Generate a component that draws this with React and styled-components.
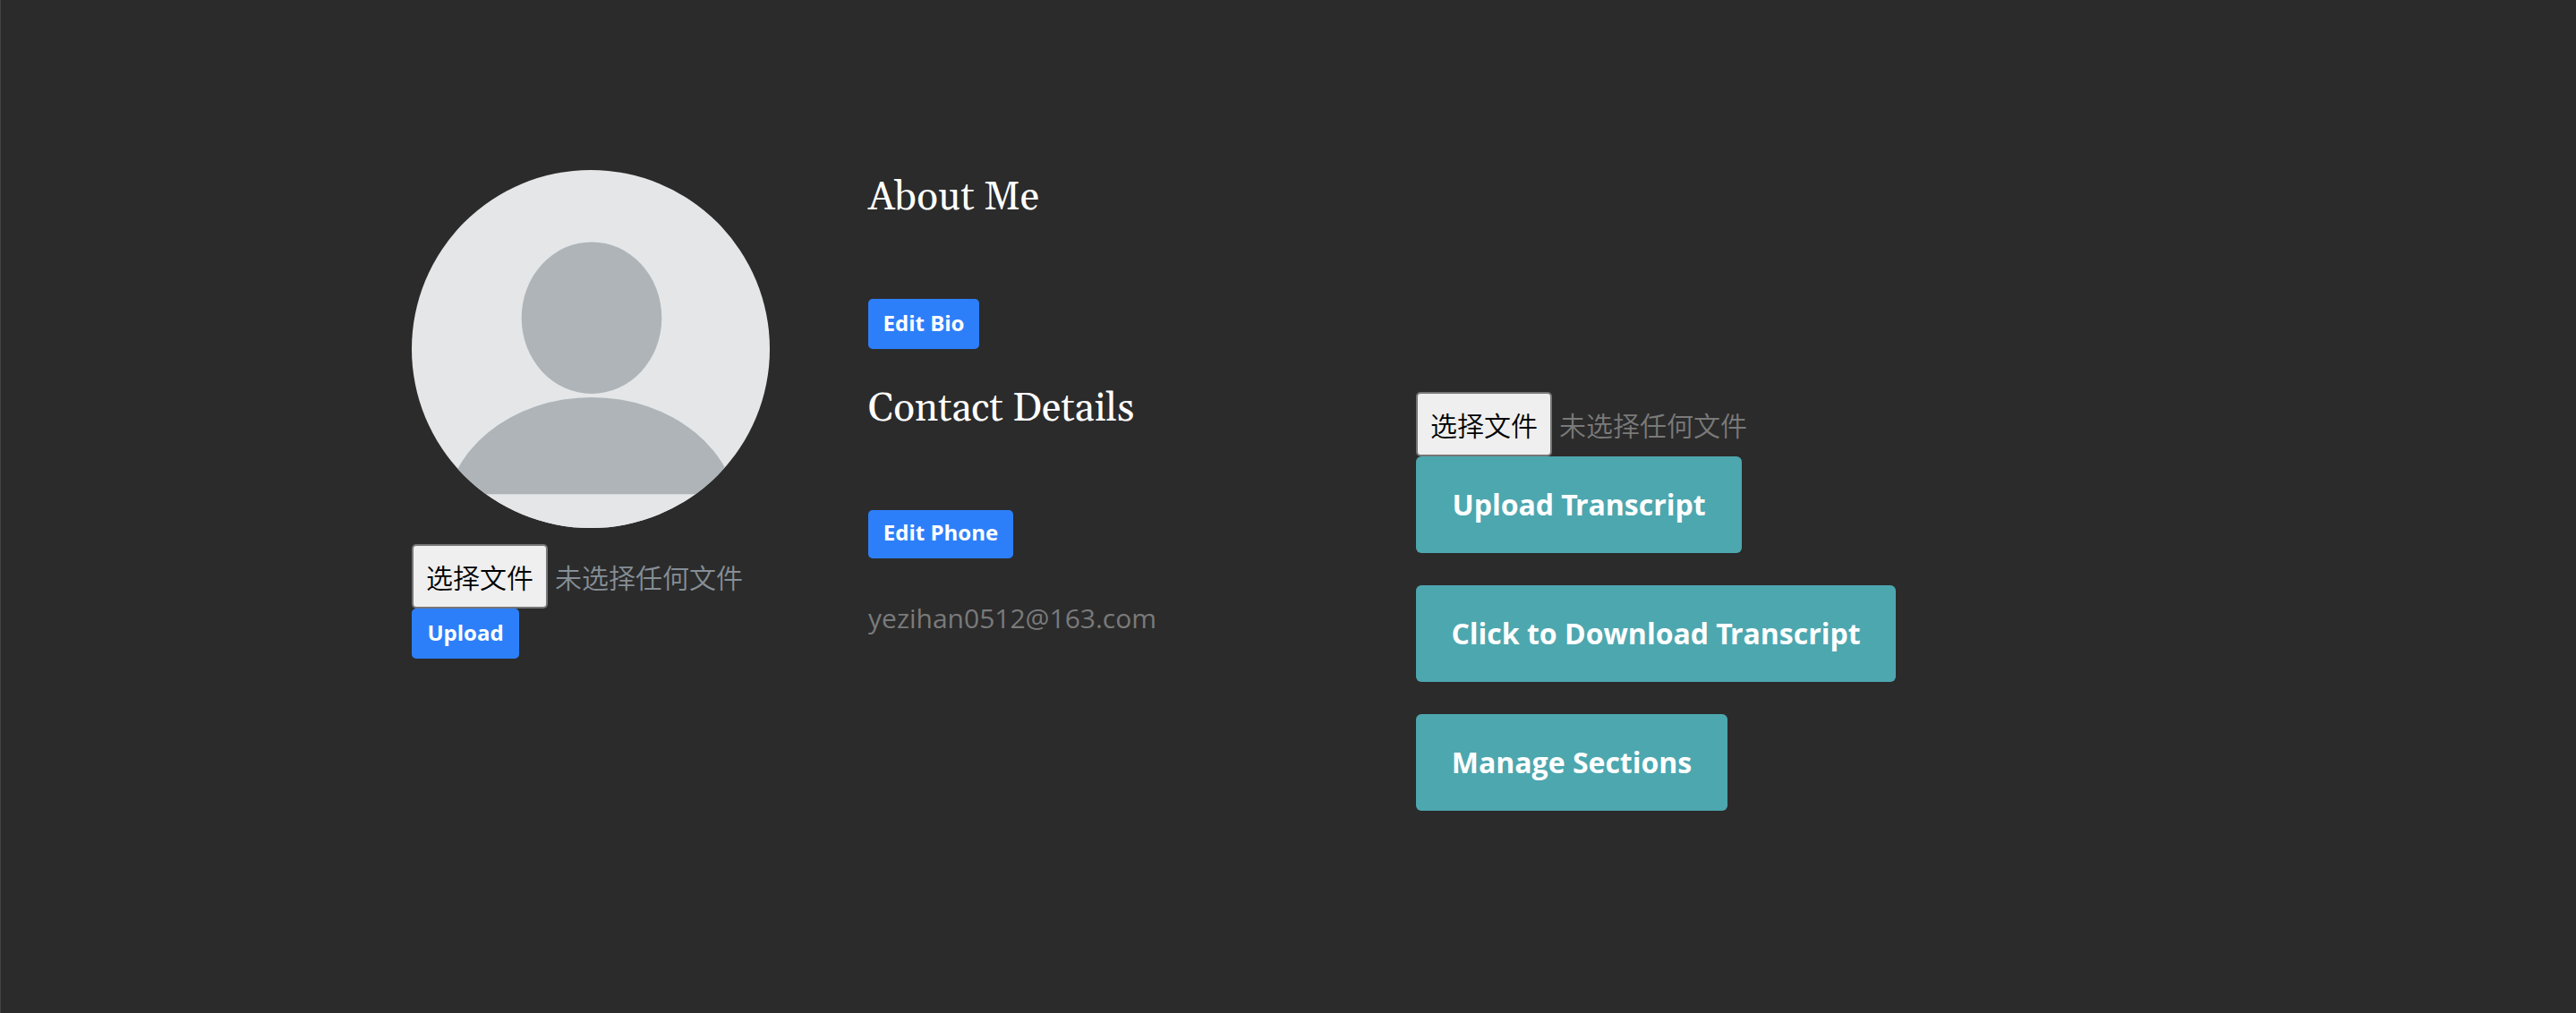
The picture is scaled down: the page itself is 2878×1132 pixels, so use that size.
import React from "react";
import styled, { createGlobalStyle } from "styled-components";

const GlobalStyle = createGlobalStyle`
  * { box-sizing: border-box; }
  body {
    margin: 0;
    background: #2b2b2b;
    font-family: "Open Sans", "Noto Sans CJK SC", sans-serif;
    font-size: 30px;
    color: #7a7a7a;
  }
`;

const Page = styled.main`
  display: flex;
  align-items: flex-start;
  height: 1132px;
  padding: 190px 0 0 459px;
  border-left: 1px solid #444444;
`;

const AvatarColumn = styled.section`
  display: flex;
  flex-direction: column;
  align-items: flex-start;
  width: 510px;
`;

const DetailsColumn = styled.section`
  display: flex;
  flex-direction: column;
  align-items: flex-start;
  width: 612px;
`;

const ActionsColumn = styled.section`
  display: flex;
  flex-direction: column;
  align-items: flex-start;
  padding-top: 248px;
`;

const Avatar = styled.svg`
  display: block;
  width: 400px;
  height: 400px;
  border-radius: 50%;
  background: #e4e6e8;
  margin-bottom: 18px;
`;

const FileRow = styled.div`
  display: flex;
  align-items: center;
  gap: 8px;
  height: 72px;
  color: ${(p) => p.$color};
  font-family: "Noto Sans CJK SC", sans-serif;
  font-size: 30px;
  font-weight: 350;
  line-height: 44px;
  white-space: nowrap;
`;

const FileButton = styled.button`
  width: 152px;
  height: 72px;
  padding: 0;
  border: 2px solid #767676;
  border-radius: 5px;
  background: #efefef;
  color: #000;
  font: inherit;
  white-space: nowrap;
`;

const SmallButton = styled.button`
  width: ${(p) => p.$width}px;
  height: ${(p) => p.$height || 56}px;
  padding: 0 0 ${(p) => p.$lift || 2}px;
  border: 0;
  border-radius: 5px;
  background: #2d7ff9;
  color: #fff;
  font: 700 24px/34px "Open Sans", sans-serif;
  white-space: nowrap;
`;

const LargeButton = styled.button`
  width: ${(p) => p.$width}px;
  height: 108px;
  margin-bottom: 36px;
  padding: 0;
  border: 0;
  border-radius: 6px;
  background: #4da7af;
  color: #fff;
  font: 700 32px/44px "Open Sans", sans-serif;
  white-space: nowrap;
`;

const TightLetter = styled.span`
  letter-spacing: -3px;
`;

const Heading = styled.h2`
  height: 56px;
  margin: ${(p) => p.$top}px 0 85px;
  color: #fff;
  font: 400 44px/56px Georgia, Gelasio, "Liberation Serif", serif;
  white-space: nowrap;
`;

const Email = styled.p`
  margin: 45px 0 0;
  font-size: 30px;
  line-height: 44px;
`;

function FilePicker({ color }) {
  return (
    <FileRow $color={color}>
      <FileButton type="button">选择文件</FileButton>
      <span>未选择任何文件</span>
    </FileRow>
  );
}

export default function App() {
  return (
    <>
      <GlobalStyle />
      <Page>
        <AvatarColumn>
          <Avatar viewBox="0 0 400 400" role="img" aria-label="Profile">
            <g fill="#aeb4b7">
              <ellipse cx="201" cy="165.2" rx="78.3" ry="84.8" />
              <path d="M37 389 A164 135 0 0 1 365 389 L365 362.5 L37 362.5 Z" />
            </g>
            <rect y="362.5" width="400" height="37.5" fill="#e4e6e8" />
          </Avatar>
          <FilePicker color="#868e96" />
          <SmallButton $width={120}>Upload</SmallButton>
        </AvatarColumn>
        <DetailsColumn>
          <Heading $top={3}>About Me</Heading>
          <SmallButton $width={124}>Edit Bio</SmallButton>
          <Heading $top={39}>Contact Details</Heading>
          <SmallButton $width={162} $height={54} $lift={4}>Edit Phone</SmallButton>
          <Email>yezihan0512@163.com</Email>
        </DetailsColumn>
        <ActionsColumn>
          <FilePicker color="#7a7a7a" />
          <LargeButton $width={364}>
            Upload <TightLetter>T</TightLetter>ranscript
          </LargeButton>
          <LargeButton $width={536}>
            Click to Download <TightLetter>T</TightLetter>ranscript
          </LargeButton>
          <LargeButton $width={348}>Manage Sections</LargeButton>
        </ActionsColumn>
      </Page>
    </>
  );
}
